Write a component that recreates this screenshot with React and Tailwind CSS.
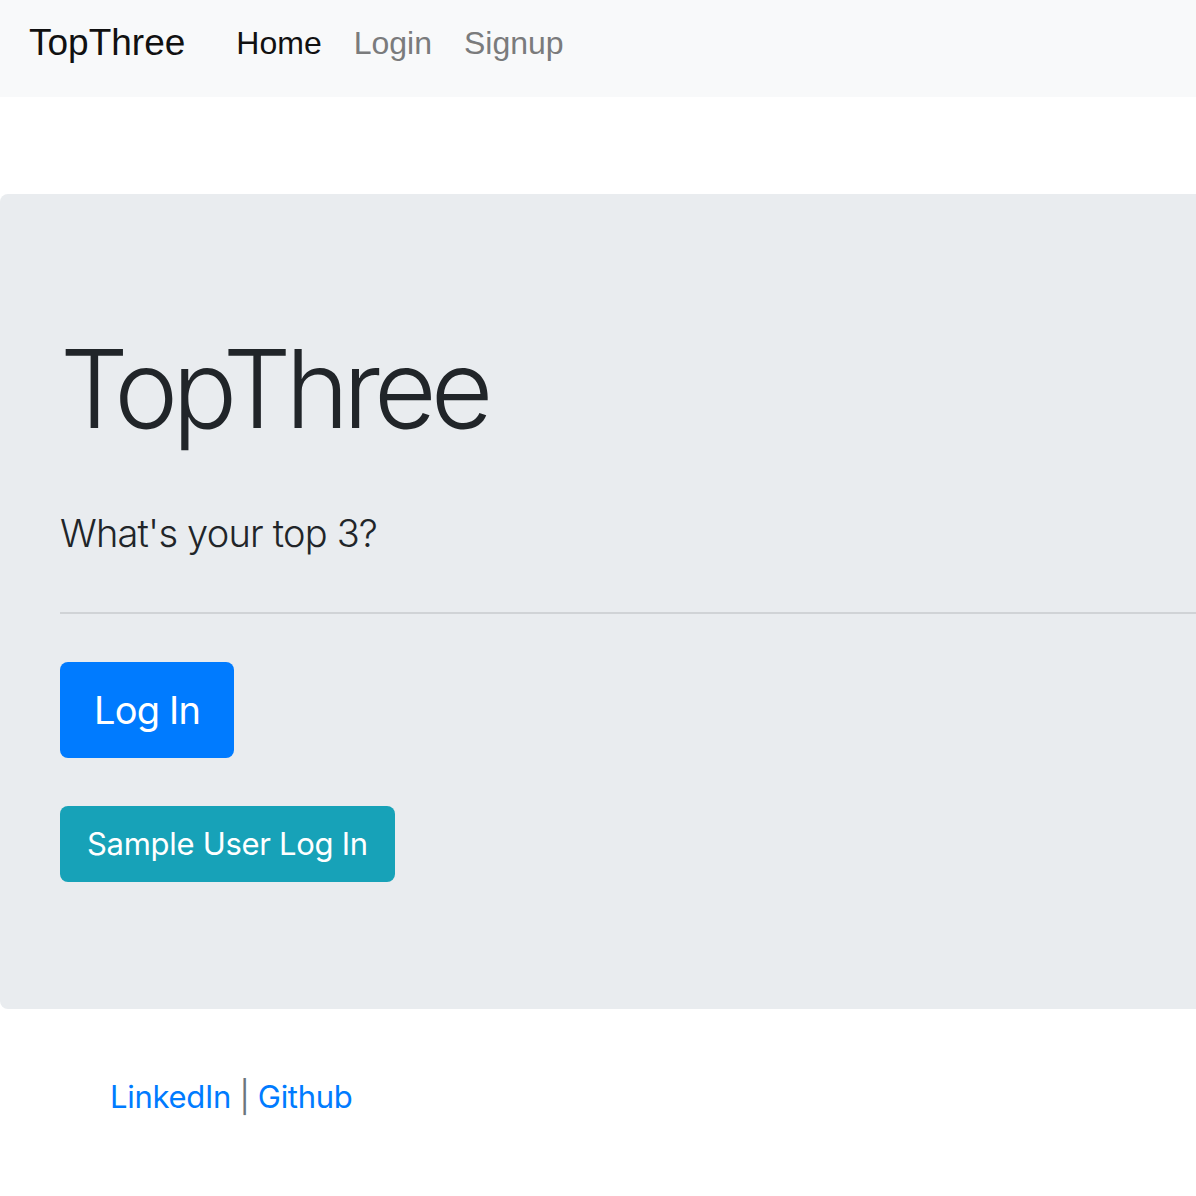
export default function App() {
  return (
    <div className="min-h-[1196px] bg-white overflow-hidden font-['Inter',sans-serif] text-[#212529]">
      <nav className="h-[97px] bg-[#f8f9fa] flex items-center px-[29px] pb-[12px] font-['Liberation_Sans',Arial,sans-serif]">
        <a href="#" className="text-[37px] text-[#111] mr-[35px]">TopThree</a>
        <div className="flex items-center">
          <a href="#" className="text-[32px] text-[#111] px-[16px]">Home</a>
          <a href="#" className="text-[32px] text-[#7a7b7c] px-[16px]">Login</a>
          <a href="#" className="text-[32px] text-[#7a7b7c] px-[16px]">Signup</a>
        </div>
      </nav>

      <section className="mt-[97px] h-[815px] bg-[#e9ecef] rounded-l-lg pl-[60px] pt-[128px]">
        <h1 className="text-[108px] leading-[134px] font-light tracking-[-6px]">TopThree</h1>
        <p className="mt-[47px] text-[38px] leading-[60px] font-light tracking-[-0.8px]">What's your top 3?</p>
        <hr className="mt-[49px] border-0 border-t-2 border-[#d0d3d6]" />
        <div className="mt-[48px] flex flex-col items-start gap-[48px]">
          <button className="h-[96px] px-[34px] inline-flex items-center rounded-lg bg-[#007bff] text-white text-[38px] tracking-[-0.8px]">
            Log In
          </button>
          <button className="h-[76px] px-[27px] inline-flex items-center rounded-lg bg-[#17a2b8] text-white text-[31px] tracking-[-0.3px]">
            Sample User Log In
          </button>
        </div>
      </section>

      <footer className="pt-[64px] pl-[110px] text-[31px] leading-[48px] tracking-[-0.3px]">
        <a href="#" className="text-[#007bff]">LinkedIn</a>
        <span className="text-[#6c757d]"> | </span>
        <a href="#" className="text-[#007bff]">Github</a>
      </footer>
    </div>
  );
}
